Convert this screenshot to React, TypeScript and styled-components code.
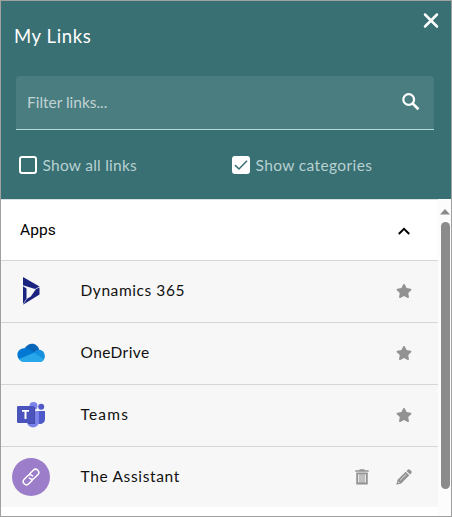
import React from "react";
import styled, { createGlobalStyle } from "styled-components";
import { FaStar } from "react-icons/fa";

const GlobalStyle = createGlobalStyle`
  *, *::before, *::after { box-sizing: border-box; }
  body { margin: 0; background: #fff; }
`;

const Panel = styled.main`
  display: flex;
  flex-direction: column;
  width: 452px;
  height: 517px;
  border: 1px solid #a0a0a0;
  background: #fff;
  font-family: Lato, "Open Sans", sans-serif;
  overflow: hidden;
`;

const Header = styled.header`
  display: flex;
  flex-direction: column;
  height: 198px;
  flex: none;
  padding: 9px 17px 0 13px;
  background: #387074;
  color: #fff;
`;

const TitleRow = styled.div`
  display: flex;
  justify-content: space-between;
  height: 66px;
  margin-right: -6px;
`;

const Title = styled.h1`
  margin: 14px 0 0;
  font-size: 18.5px;
  font-weight: 400;
  line-height: 25px;
  letter-spacing: 0.6px;
`;

const IconButton = styled.button`
  display: flex;
  align-items: flex-start;
  margin: 0;
  padding: 0;
  border: 0;
  background: none;
  color: inherit;
`;

const SearchField = styled.label`
  display: flex;
  align-items: center;
  height: 54px;
  margin-left: 2px;
  padding: 0 11px 2px 11px;
  border-bottom: 1px solid #b5dadb;
  border-radius: 4px 4px 0 0;
  background: #497d80;
`;

const SearchInput = styled.input`
  flex: 1;
  min-width: 0;
  padding: 0;
  border: 0;
  outline: 0;
  background: none;
  color: #fff;
  font: 400 15.5px/22px Lato, sans-serif;
  letter-spacing: -0.02px;
  &::placeholder { color: #c1d3d4; opacity: 1; }
`;

const Options = styled.div`
  display: grid;
  grid-template-columns: 213px 1fr;
  margin: 25px 0 0 4.5px;
`;

const Option = styled.div<{ $spacing: string }>`
  display: flex;
  align-items: center;
  gap: 6px;
  height: 20px;
  color: #b9d0d1;
  font-size: 15.5px;
  line-height: 20px;
  letter-spacing: ${(p) => p.$spacing};
`;

const Box = styled.span<{ $checked?: boolean }>`
  display: flex;
  align-items: center;
  justify-content: center;
  width: 18px;
  height: 18px;
  border: 2px solid #fff;
  border-radius: 3px;
  background: ${(p) => (p.$checked ? "#fff" : "transparent")};
`;

const Body = styled.div`
  display: flex;
  flex: 1;
  min-height: 0;
`;

const List = styled.section`
  width: 437px;
`;

const Category = styled.div`
  display: flex;
  align-items: center;
  justify-content: space-between;
  height: 62px;
  padding: 0 28px 0 19px;
  border-top: 1px solid #d9dfe0;
  border-bottom: 1px solid #d6d6d6;
  color: #000;
  font: 400 15.5px/22px Roboto, sans-serif;
  letter-spacing: 0.05px;

  svg { margin-top: 2px; }
`;

const Row = styled.div<{ $last?: boolean }>`
  display: flex;
  align-items: center;
  height: ${(p) => (p.$last ? 60 : 62)}px;
  padding: 0 26px ${(p) => (p.$last ? 0 : 1)}px 11px;
  border-bottom: ${(p) => (p.$last ? "0" : "1px solid #d6d6d6")};
  background: #f7f7f7;
`;

const Logo = styled.span`
  display: flex;
  align-items: center;
  justify-content: center;
  width: 38px;
  height: 38px;
`;

const LinkBadge = styled(Logo)`
  border-radius: 50%;
  background: #9b7dca;
`;

const Name = styled.span<{ $spacing: string }>`
  flex: 1;
  margin: 0 0 2px 30.5px;
  color: #111;
  font-size: 15.5px;
  line-height: 22px;
  letter-spacing: ${(p) => p.$spacing};
`;

const Actions = styled.span`
  display: flex;
  align-items: center;
  gap: 27px;
  margin-bottom: 1px;
  color: #929292;
`;

const Scrollbar = styled.div`
  display: flex;
  flex-direction: column;
  align-items: flex-end;
  width: 13px;
  padding: 10px 1px 0 0;
  background: #fcfcfc;
`;

const Thumb = styled.div`
  width: 9px;
  height: 267px;
  margin-top: 7px;
  border-radius: 5px;
  background: #8b8b8b;
`;

const SearchIcon = () => (
  <svg width="24" height="24" viewBox="0 0 24 24" fill="none" stroke="#fff">
    <circle cx="9.7" cy="9.5" r="5.4" strokeWidth="2.2" />
    <path d="M13.6 13.4L19.4 19.2" strokeWidth="2.7" />
  </svg>
);

const DynamicsLogo = () => (
  <svg width="18" height="28" viewBox="0 0 18 28" fill="#1b237f">
    <path d="M1 0L17.5 9.5L13 12L1 8.2Z" />
    <path d="M1 9.2L4.5 11.4V21.5L1 27Z" />
    <path d="M17.5 10.5V17.5L1 27.8L5 21.8L8.8 19.5L14 12Z" />
  </svg>
);

const OneDriveLogo = () => (
  <svg width="28" height="20" viewBox="0 0 28 20">
    <path d="M7.5 6C10 0 19 -2 22.2 6.5L16 12L7.5 6Z" fill="#0864b8" />
    <path d="M5.5 18C-1 17 -2 6 7 5.2C10 4.5 12 6.2 18 10L10 18Z" fill="#0078d4" />
    <path d="M17 9.5C20 5 27.7 6 27.8 13.3C27.8 17 25 18 24 18L16 13Z" fill="#1490df" />
    <path d="M2 16L17 9.8L27 16.2C26 19 23.5 19 22.5 19H6.5C4 19 3 17.5 2 16Z" fill="#28a8ea" />
  </svg>
);

const TeamsLogo = () => (
  <svg width="28" height="26" viewBox="0 0 28 26">
    <circle cx="16.5" cy="4" r="4" fill="#7b83eb" />
    <circle cx="24.2" cy="4.8" r="3" fill="#5059c9" />
    <path d="M19 9H28V17A5 5 0 0 1 19 20Z" fill="#5059c9" />
    <path d="M10 9H22V19.5A6 6 0 0 1 10 19.5Z" fill="#7b83eb" />
    <path d="M11 5H18V22H11Z" fill="#454ca5" />
    <rect y="4" width="17" height="17" rx="1.3" fill="#4b53bc" />
    <path d="M5 8H12V9.8H9.5V17H7.5V9.8H5Z" fill="#fff" />
  </svg>
);

const ChainIcon = () => (
  <svg width="18" height="18" viewBox="0 0 18 18" fill="none" stroke="#fff" strokeWidth="1.5" strokeLinecap="round">
    <g transform="rotate(-45 9 9)">
      <path d="M7.6 12.2H2.6A3.2 3.2 0 0 1 2.6 5.8H7.6A3.2 3.2 0 0 1 10.8 9.4" />
      <path d="M10.4 5.8H15.4A3.2 3.2 0 0 1 15.4 12.2H10.4A3.2 3.2 0 0 1 7.2 8.6" />
    </g>
  </svg>
);

const TrashIcon = () => (
  <svg width="14" height="16" viewBox="0 0 14 16" fill="none" stroke="#929292">
    <path d="M0.3 2H13.7M4.5 1H9.5" strokeWidth="1.7" />
    <path d="M2.2 4.4V14.5H11.8V4.4Z" strokeWidth="1.9" />
    <path d="M5 5V14M7 5V14M9 5V14" strokeWidth="1.1" />
  </svg>
);

const PencilIcon = () => (
  <svg width="16" height="16" viewBox="0 0 16 16" fill="#929292">
    <path d="M9.7 2.7L13.3 6.3L5.2 14.4L0.3 15.7L1.6 10.8Z" />
    <path d="M10.5 1.9L12 0.6Q13 -0.1 13.9 0.7L15.3 2.1Q16.1 3 15.4 4L14.1 5.5Z" />
    <path d="M4.2 11.2L10.1 5.3" stroke="#f7f7f7" strokeWidth="0.8" />
    <path d="M1.9 12.6L3.4 14.1" stroke="#f7f7f7" strokeWidth="1" />
  </svg>
);

const links = [
  { name: "Dynamics 365", logo: <DynamicsLogo />, spacing: "0.58px" },
  { name: "OneDrive", logo: <OneDriveLogo />, spacing: "0.4px" },
  { name: "Teams", logo: <TeamsLogo />, spacing: "1.2px" },
];

export default function App() {
  return (
    <>
      <GlobalStyle />
      <Panel>
        <Header>
          <TitleRow>
            <Title>My Links</Title>
            <IconButton aria-label="Close">
              <svg width="18" height="22" viewBox="0 0 18 22" fill="none" stroke="#fff" strokeWidth="2.5" strokeLinecap="round">
                <path d="M3 4.5L15 16.5M15 4.5L3 16.5" />
              </svg>
            </IconButton>
          </TitleRow>
          <SearchField>
            <SearchInput placeholder="Filter links..." />
            <IconButton aria-label="Search"><SearchIcon /></IconButton>
          </SearchField>
          <Options>
            <Option $spacing="0.25px"><Box />Show all links</Option>
            <Option $spacing="0.38px">
              <Box $checked>
                <svg width="14" height="14" viewBox="0 0 14 14" fill="none" stroke="#387074" strokeWidth="1.6">
                  <path d="M1 7.2L5 11L13 2.8" />
                </svg>
              </Box>
              Show categories
            </Option>
          </Options>
        </Header>
        <Body>
          <List>
            <Category>
              Apps
              <svg width="12" height="8" viewBox="0 0 12 8" fill="none" stroke="#000" strokeWidth="2">
                <path d="M0.8 7L6 1.8L11.2 7" />
              </svg>
            </Category>
            {links.map((link) => (
              <Row key={link.name}>
                <Logo>{link.logo}</Logo>
                <Name $spacing={link.spacing}>{link.name}</Name>
                <Actions><FaStar size={16} /></Actions>
              </Row>
            ))}
            <Row $last>
              <LinkBadge><ChainIcon /></LinkBadge>
              <Name $spacing="0.65px">The Assistant</Name>
              <Actions><TrashIcon /><PencilIcon /></Actions>
            </Row>
          </List>
          <Scrollbar>
            <svg width="10" height="6" viewBox="0 0 10 6"><path d="M0 5.5L5 0L10 5.5Z" fill="#8b8b8b" /></svg>
            <Thumb />
          </Scrollbar>
        </Body>
      </Panel>
    </>
  );
}
